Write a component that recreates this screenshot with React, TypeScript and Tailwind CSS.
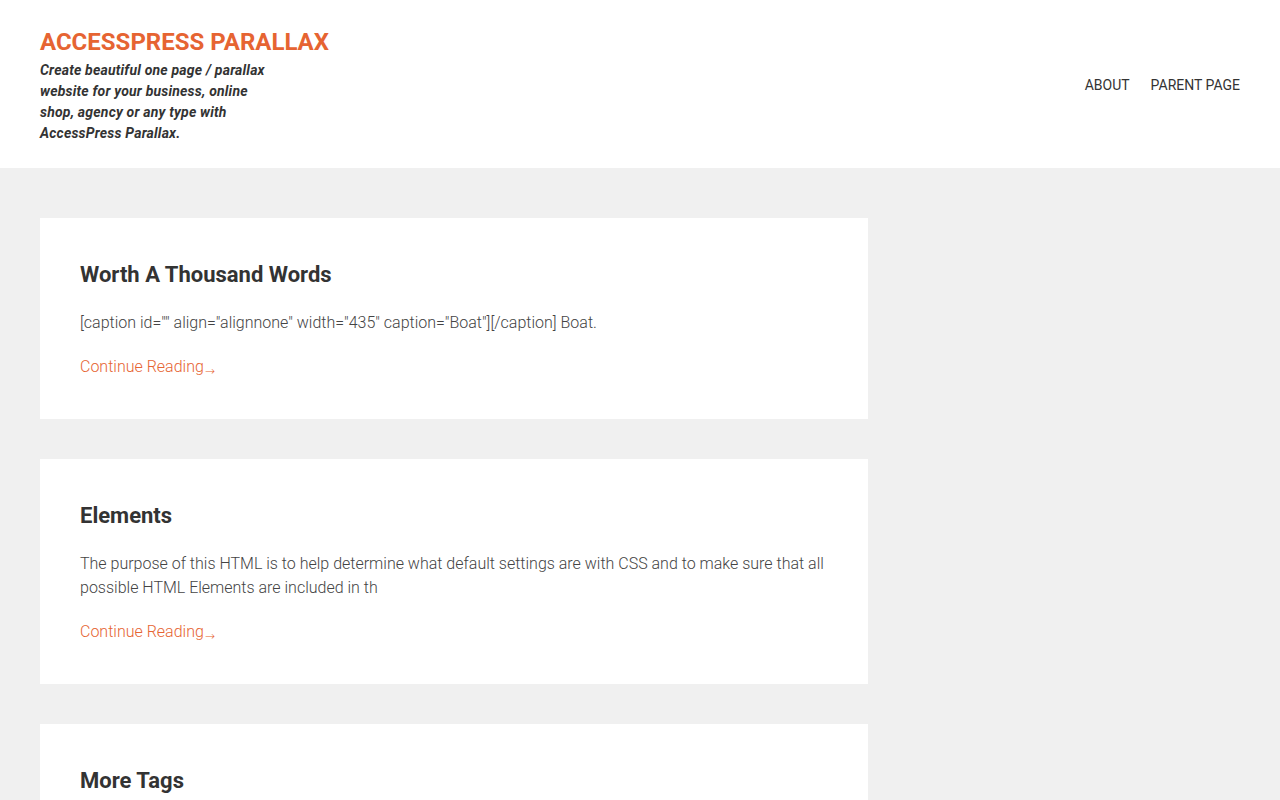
import React from 'react';

const posts = [
  {
    title: 'Worth A Thousand Words',
    excerpt: '[caption id="" align="alignnone" width="435" caption="Boat"][/caption] Boat.',
  },
  {
    title: 'Elements',
    excerpt:
      'The purpose of this HTML is to help determine what default settings are with CSS and to make sure that all possible HTML Elements are included in th',
  },
  {
    title: 'More Tags',
    excerpt: 'More tags on this post to test how the theme displays many tags in the footer of the post.',
  },
];

export default function App() {
  return (
    <div className="min-h-screen bg-[#f0f0f0] font-['Roboto',sans-serif] text-[#333]">
      {/* header */}
      <header className="bg-white px-10 pt-[28px] pb-[24px] flex justify-between items-center">
        <div className="w-[230px]">
          <h1 className="text-[24px] leading-[28px] font-bold text-[#e66432] whitespace-nowrap uppercase">
            AccessPress Parallax
          </h1>
          <p className="mt-[4px] text-[14px] leading-[21px] font-bold italic tracking-[0.2px] text-[#333]">
            Create beautiful one page / parallax website for your business, online shop, agency or any type with AccessPress Parallax.
          </p>
        </div>
        <nav className="flex gap-[21px] mb-[2px] text-[14px] text-[#333] uppercase">
          <a>About</a>
          <a>Parent Page</a>
        </nav>
      </header>

      {/* posts */}
      <main className="px-10 pt-[50px] pb-10">
        <div className="w-[828px] flex flex-col gap-10">
          {posts.map((post) => (
            <article key={post.title} className="bg-white px-10 pt-[41px] pb-[40px]">
              <h2 className="text-[22px] leading-[32px] font-bold text-[#333]">{post.title}</h2>
              <p className="mt-5 text-[16px] leading-[24px] font-light text-[#444]">{post.excerpt}</p>
              <a className="mt-5 block text-[16px] leading-[24px] font-light text-[#e66432]">
                Continue Reading
                <span className="ml-px text-[12px] leading-none align-[-3px] font-['DejaVu_Sans',sans-serif]">→</span>
              </a>
            </article>
          ))}
        </div>
      </main>
    </div>
  );
}
